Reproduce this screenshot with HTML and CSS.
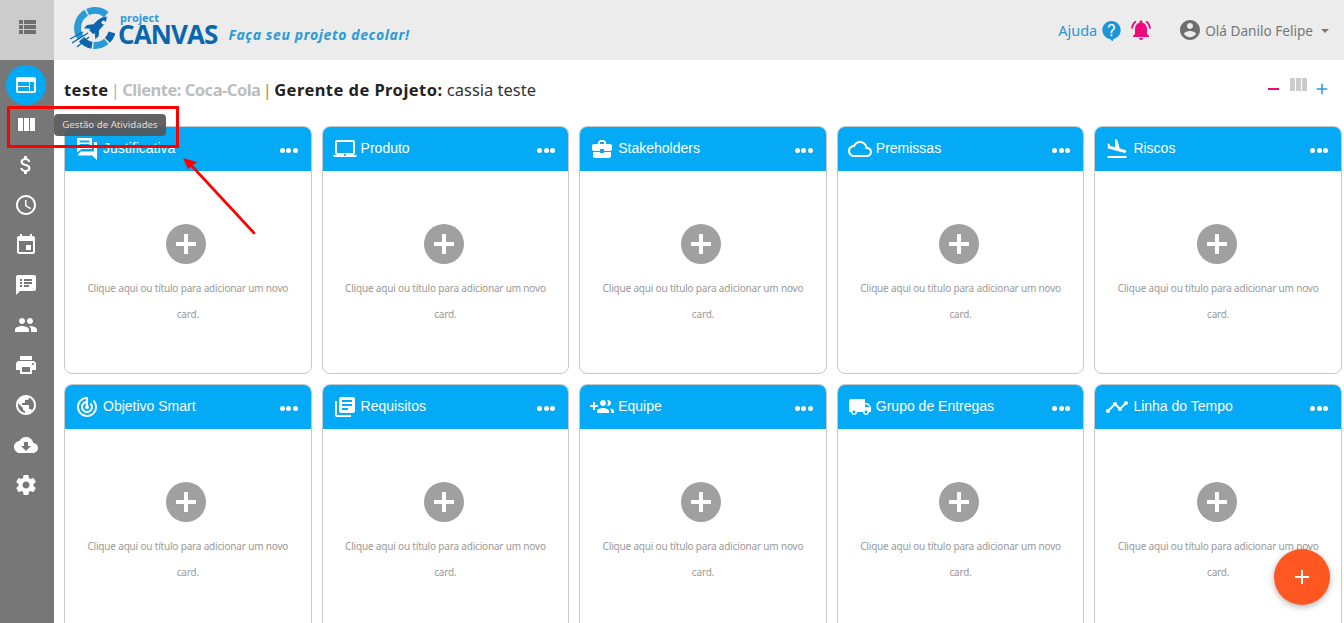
FILE: index.html
```html
<!DOCTYPE html>
<html lang="pt-BR">
<head>
<meta charset="utf-8">
<title>Project Canvas</title>
<link rel="stylesheet" href="styles.css">
</head>
<body>
<svg class="sprite" aria-hidden="true">
  <symbol id="i-list" viewBox="0 0 24 24"><path d="M4 14h4v-4H4v4zm0 5h4v-4H4v4zM4 9h4V5H4v4zm5 5h12v-4H9v4zm0 5h12v-4H9v4zM9 5v4h12V5H9z"/></symbol>
  <symbol id="i-web" viewBox="0 0 24 24"><path d="M20 4H4c-1.1 0-1.99.9-1.99 2L2 18c0 1.1.9 2 2 2h16c1.1 0 2-.9 2-2V6c0-1.1-.9-2-2-2zm-5 14H4v-4h11v4zm0-5H4V9h11v4zm5 5h-4V9h4v9z"/></symbol>
  <symbol id="i-col" viewBox="0 0 24 24"><path d="M10 18h5V5h-5v13zm-6 0h5V5H4v13zM16 5v13h5V5h-5z"/></symbol>
  <symbol id="i-money" viewBox="0 0 24 24"><path d="M11.8 10.9c-2.27-.59-3-1.2-3-2.15 0-1.09 1.01-1.85 2.7-1.85 1.78 0 2.44.85 2.5 2.1h2.21c-.07-1.72-1.12-3.3-3.21-3.81V3h-3v2.16c-1.94.42-3.5 1.68-3.5 3.61 0 2.31 1.91 3.46 4.7 4.13 2.5.6 3 1.48 3 2.41 0 .69-.49 1.79-2.7 1.79-2.06 0-2.87-.92-2.98-2.1h-2.2c.12 2.19 1.76 3.42 3.68 3.83V21h3v-2.15c1.95-.37 3.5-1.5 3.5-3.55 0-2.84-2.43-3.81-4.7-4.4z"/></symbol>
  <symbol id="i-time" viewBox="0 0 24 24"><path d="M11.99 2C6.47 2 2 6.48 2 12s4.47 10 9.99 10C17.52 22 22 17.52 22 12S17.52 2 11.99 2zM12 20c-4.42 0-8-3.58-8-8s3.58-8 8-8 8 3.58 8 8-3.58 8-8 8zm.5-13H11v6l5.25 3.15.75-1.23-4.5-2.67z"/></symbol>
  <symbol id="i-event" viewBox="0 0 24 24"><path d="M17 12h-5v5h5v-5zM16 1v2H8V1H6v2H5c-1.11 0-1.99.9-1.99 2L3 19c0 1.1.89 2 2 2h14c1.1 0 2-.9 2-2V5c0-1.1-.9-2-2-2h-1V1h-2zm3 18H5V8h14v11z"/></symbol>
  <symbol id="i-notes" viewBox="0 0 24 24"><path d="M20 2H4c-1.1 0-1.99.9-1.99 2L2 22l4-4h14c1.1 0 2-.9 2-2V4c0-1.1-.9-2-2-2zM8 14H6v-2h2v2zm0-3H6V9h2v2zm0-3H6V6h2v2zm7 6h-5v-2h5v2zm3-3h-8V9h8v2zm0-3h-8V6h8v2z"/></symbol>
  <symbol id="i-people" viewBox="0 0 24 24"><path d="M16 11c1.66 0 2.99-1.34 2.99-3S17.66 5 16 5c-1.66 0-3 1.34-3 3s1.34 3 3 3zm-8 0c1.66 0 2.99-1.34 2.99-3S9.66 5 8 5C6.34 5 5 6.34 5 8s1.34 3 3 3zm0 2c-2.33 0-7 1.17-7 3.5V19h14v-2.5c0-2.33-4.67-3.5-7-3.5zm8 0c-.29 0-.62.02-.97.05 1.16.84 1.97 1.97 1.97 3.45V19h6v-2.5c0-2.33-4.67-3.5-7-3.5z"/></symbol>
  <symbol id="i-print" viewBox="0 0 24 24"><path d="M19 8H5c-1.66 0-3 1.34-3 3v6h4v4h12v-4h4v-6c0-1.66-1.34-3-3-3zm-3 11H8v-5h8v5zm3-7c-.55 0-1-.45-1-1s.45-1 1-1 1 .45 1 1-.45 1-1 1zm-1-9H6v4h12V3z"/></symbol>
  <symbol id="i-public" viewBox="0 0 24 24"><path d="M12 2C6.48 2 2 6.48 2 12s4.48 10 10 10 10-4.48 10-10S17.52 2 12 2zm-1 17.93c-3.95-.49-7-3.85-7-7.93 0-.62.08-1.21.21-1.79L9 15v1c0 1.1.9 2 2 2v1.93zm6.9-2.54c-.26-.81-1-1.39-1.9-1.39h-1v-3c0-.55-.45-1-1-1H8v-2h2c.55 0 1-.45 1-1V7h2c1.1 0 2-.9 2-2v-.41c2.93 1.19 5 4.06 5 7.41 0 2.08-.8 3.97-2.1 5.39z"/></symbol>
  <symbol id="i-download" viewBox="0 0 24 24"><path d="M19.35 10.04C18.67 6.59 15.64 4 12 4 9.11 4 6.6 5.64 5.35 8.04 2.34 8.36 0 10.91 0 14c0 3.31 2.69 6 6 6h13c2.76 0 5-2.24 5-5 0-2.64-2.05-4.78-4.65-4.96zM17 13l-5 5-5-5h3V9h4v4h3z"/></symbol>
  <symbol id="i-settings" viewBox="0 0 24 24"><path d="M19.43 12.98c.04-.32.07-.64.07-.98s-.03-.66-.07-.98l2.11-1.65c.19-.15.24-.42.12-.64l-2-3.46c-.12-.22-.39-.3-.61-.22l-2.49 1c-.52-.4-1.08-.73-1.69-.98l-.38-2.65C14.46 2.18 14.25 2 14 2h-4c-.25 0-.46.18-.49.42l-.38 2.65c-.61.25-1.17.59-1.69.98l-2.49-1c-.23-.09-.49 0-.61.22l-2 3.46c-.13.22-.07.49.12.64l2.11 1.65c-.04.32-.07.65-.07.98s.03.66.07.98l-2.11 1.65c-.19.15-.24.42-.12.64l2 3.46c.12.22.39.3.61.22l2.49-1c.52.4 1.08.73 1.69.98l.38 2.65c.03.24.24.42.49.42h4c.25 0 .46-.18.49-.42l.38-2.65c.61-.25 1.17-.59 1.69-.98l2.49 1c.23.09.49 0 .61-.22l2-3.46c.12-.22.07-.49-.12-.64l-2.11-1.65zM12 15.5c-1.93 0-3.5-1.57-3.5-3.5s1.57-3.5 3.5-3.5 3.5 1.57 3.5 3.5-1.57 3.5-3.5 3.5z"/></symbol>
  <symbol id="i-forum" viewBox="0 0 24 24"><path d="M2 1h15v11H6.500L2 15.500V1zm2.500 2.500v2h10v-2h-10zm0 3.500v2h10V7h-10zM19 5h3v18l-5-4.500H2.500l3-4H19V5z"/></symbol>
  <symbol id="i-laptop" viewBox="0 0 24 24"><path d="M20 18c1.1 0 1.99-.9 1.99-2L22 5c0-1.1-.9-2-2-2H4c-1.1 0-2 .9-2 2v11c0 1.1.9 2 2 2H0c0 1.1.9 2 2 2h20c1.1 0 2-.9 2-2h-4zM4 5h16v11H4V5zm8 14c-.55 0-1-.45-1-1s.45-1 1-1 1 .45 1 1-.45 1-1 1z"/></symbol>
  <symbol id="i-case" viewBox="0 0 24 24"><path d="M10 16v-1H3.01L3 19c0 1.11.89 2 2 2h14c1.11 0 2-.89 2-2v-4h-7v1h-4zm10-9h-4.01V5l-2-2h-4l-2 2v2H4c-1.1 0-2 .9-2 2v3c0 1.11.89 2 2 2h6v-2h4v2h6c1.1 0 2-.9 2-2V9c0-1.1-.9-2-2-2zm-6 0h-4V5h4v2z"/></symbol>
  <symbol id="i-cloud" viewBox="0 0 24 24"><path d="M19.35 10.04C18.67 6.59 15.64 4 12 4 9.11 4 6.6 5.64 5.35 8.04 2.34 8.36 0 10.91 0 14c0 3.31 2.69 6 6 6h13c2.76 0 5-2.24 5-5 0-2.64-2.05-4.78-4.65-4.96zM19 18H6c-2.21 0-4-1.79-4-4s1.79-4 4-4h.71C7.37 7.69 9.48 6 12 6c3.04 0 5.5 2.46 5.5 5.5v.5H19c1.66 0 3 1.34 3 3s-1.34 3-3 3z"/></symbol>
  <symbol id="i-land" viewBox="0 0 24 24"><path d="M2.5 19h19v2h-19zm7.18-5.73l4.35 1.16 5.31 1.42c.8.21 1.62-.26 1.84-1.06.21-.8-.26-1.62-1.06-1.84l-5.31-1.42-2.76-9.02L10.12 2v8.28L5.15 8.95l-.93-2.32-1.45-.39v5.17l1.6.43 5.31 1.43z"/></symbol>
  <symbol id="i-target" viewBox="0 0 24 24"><path d="M19.07 4.93l-1.41 1.41C19.1 7.79 20 9.79 20 12c0 4.42-3.58 8-8 8s-8-3.58-8-8c0-4.08 3.05-7.44 7-7.93v2.02C8.16 6.57 6 9.03 6 12c0 3.31 2.69 6 6 6s6-2.69 6-6c0-1.66-.67-3.16-1.76-4.24l-1.41 1.41C15.55 9.9 16 10.9 16 12c0 2.21-1.79 4-4 4s-4-1.79-4-4c0-1.86 1.28-3.41 3-3.86v2.14c-.6.35-1 .98-1 1.72 0 1.1.9 2 2 2s2-.9 2-2c0-.74-.4-1.38-1-1.72V2h-1C6.48 2 2 6.48 2 12s4.48 10 10 10 10-4.48 10-10c0-2.76-1.12-5.26-2.93-7.07z"/></symbol>
  <symbol id="i-books" viewBox="0 0 24 24"><path d="M4 6H2v14c0 1.1.9 2 2 2h14v-2H4V6zm16-4H8c-1.1 0-2 .9-2 2v12c0 1.1.9 2 2 2h12c1.1 0 2-.9 2-2V4c0-1.1-.9-2-2-2zm-1 9H9V9h10v2zm-4 4H9v-2h6v2zm4-8H9V5h10v2z"/></symbol>
  <symbol id="i-group" viewBox="0 0 24 24"><path d="M8 10H5V7H3v3H0v2h3v3h2v-3h3v-2zm10 1c1.66 0 2.99-1.34 2.99-3S19.66 5 18 5c-.32 0-.63.05-.91.14.57.81.9 1.79.9 2.86s-.34 2.04-.9 2.86c.28.09.59.14.91.14zm-5 0c1.66 0 2.99-1.34 2.99-3S14.66 5 13 5s-3 1.34-3 3 1.34 3 3 3zm6.62 2.16c.83.73 1.38 1.66 1.38 2.84v2h3v-2c0-1.54-2.37-2.49-4.38-2.84zM13 13c-2 0-6 1-6 3v2h12v-2c0-2-4-3-6-3z"/></symbol>
  <symbol id="i-truck" viewBox="0 0 24 24"><path d="M20 8h-3V4H3c-1.1 0-2 .9-2 2v11h2c0 1.66 1.34 3 3 3s3-1.34 3-3h6c0 1.66 1.34 3 3 3s3-1.34 3-3h2v-5l-3-4zM6 18.5c-.83 0-1.5-.67-1.5-1.5s.67-1.5 1.5-1.5 1.5.67 1.5 1.5-.67 1.5-1.5 1.5zm13.5-9l1.96 2.5H17V9.5h2.5zm-1.5 9c-.83 0-1.5-.67-1.5-1.5s.67-1.5 1.5-1.5 1.5.67 1.5 1.5-.67 1.5-1.5 1.5z"/></symbol>
  <symbol id="i-line" viewBox="0 0 24 24"><path d="M23 8c0 1.1-.9 2-2 2-.18 0-.35-.02-.51-.07l-3.56 3.55c.05.16.07.34.07.52 0 1.1-.9 2-2 2s-2-.9-2-2c0-.18.02-.36.07-.52l-2.55-2.55c-.16.05-.34.07-.52.07s-.36-.02-.52-.07l-4.55 4.56c.05.16.07.33.07.51 0 1.1-.9 2-2 2s-2-.9-2-2 .9-2 2-2c.18 0 .35.02.51.07l4.56-4.55C8.02 9.36 8 9.18 8 9c0-1.1.9-2 2-2s2 .9 2 2c0 .18-.02.36-.07.52l2.55 2.55c.16-.05.34-.07.52-.07s.36.02.52.07l3.55-3.56C19.02 8.35 19 8.18 19 8c0-1.1.9-2 2-2s2 .9 2 2z"/></symbol>
  <symbol id="i-bell" viewBox="0 0 24 24"><path d="M7.58 4.08L6.15 2.65C3.75 4.48 2.17 7.3 2.03 10.5h2c.15-2.65 1.51-4.97 3.55-6.42zm12.39 6.42h2c-.15-3.2-1.73-6.02-4.12-7.85l-1.42 1.43c2.02 1.45 3.39 3.77 3.54 6.42zM18 11c0-3.07-1.64-5.64-4.5-6.32V4c0-.83-.67-1.5-1.5-1.5s-1.5.67-1.5 1.5v.68C7.63 5.36 6 7.92 6 11v5l-2 2v1h16v-1l-2-2v-5zm-6 11c.14 0 .27-.01.4-.04.65-.14 1.18-.58 1.44-1.18.1-.24.15-.5.15-.78h-4c.01 1.1.9 2 2.01 2z"/></symbol>
  <symbol id="i-user" viewBox="0 0 24 24"><path d="M12 2C6.48 2 2 6.48 2 12s4.48 10 10 10 10-4.48 10-10S17.52 2 12 2zm0 3c1.66 0 3 1.34 3 3s-1.34 3-3 3-3-1.34-3-3 1.34-3 3-3zm0 14.2c-2.5 0-4.71-1.28-6-3.22.03-1.99 4-3.08 6-3.08 1.99 0 5.97 1.09 6 3.08-1.29 1.94-3.5 3.22-6 3.22z"/></symbol>
  <symbol id="i-help" viewBox="0 0 24 24"><path d="M12 1C6.2 1 1.5 5.7 1.5 11.500c0 5.300 4 9.700 9.200 10.400L13 24.500l1.600-2.900c4.700-1.100 7.900-5.200 7.900-10.100C22.500 5.700 17.800 1 12 1zm1 17.500h-2.200v-2.200H13v2.200zm2.300-7.500l-1 1c-.8.800-1.300 1.400-1.300 3h-2.200v-.5c0-1.200.5-2.300 1.300-3.100l1.400-1.400c.4-.4.600-.9.600-1.500 0-1.200-1-2.100-2.100-2.100S9.900 7.300 9.900 8.500H7.700c0-2.400 1.900-4.300 4.300-4.300s4.300 1.900 4.300 4.300c0 1-.400 1.800-1 2.500z"/></symbol>
  <symbol id="i-plus" viewBox="0 0 24 24"><path d="M19 13h-6v6h-2v-6H5v-2h6V5h2v6h6v2z"/></symbol>
  <symbol id="i-plus-bold" viewBox="0 0 24 24"><path d="M14 10h8v4h-8v8h-4v-8H2v-4h8V2h4v8z"/></symbol>
</svg>

<div class="app">
  <button class="menu-toggle" type="button"><svg class="ico ico-menu"><use href="#i-list"/></svg></button>

  <header class="topbar">
    <div class="logo">
      <svg class="logo-mark" viewBox="0 0 46 44" aria-hidden="true">
        <g fill="none" stroke-width="7">
          <path stroke="#2b9bd8" d="M37.250 7.600A17.500 17.500 0 0 0 18.600 5.140"/>
          <path stroke="#2b9bd8" d="M17.250 5.840A17.500 17.500 0 0 0 11.700 31"/>
          <path stroke="#0a67ad" d="M12.600 32.250A17.500 17.500 0 0 0 23 38.200"/>
          <path stroke="#2b9bd8" d="M24.500 38.400A17.500 17.500 0 0 0 37.250 34.400"/>
          <path stroke="#0a67ad" d="M38.400 33.400A17.500 17.500 0 0 0 42.900 25.500"/>
        </g>
        <path fill="#0a67ad" d="M41 9.500c-5-.5-9.500 1-13 4.200l-3.500 3.600-6.500.6-3 3.300 6 .5-.5 1.800 3.500 3.400 1.800-.6.500 6 3.300-3 .6-6.400 3.500-3.600c3.200-3.300 4.500-7.800 3.800-9.800z"/>
        <circle cx="34.500" cy="15.500" r="2" fill="#ececec"/>
        <path fill="none" stroke="#0a67ad" stroke-width="1.400" d="M19 26 3 36M20 30 8 40M14 25 1 32"/>
      </svg>
      <div class="wordmark">
        <span class="wm-project">project</span>
        <span class="wm-canvas">CANVAS</span>
      </div>
      <span class="tagline">Faça seu projeto decolar!</span>
    </div>
    <div class="top-actions">
      <a class="help">Ajuda <svg class="ico ico-help"><use href="#i-help"/></svg></a>
      <svg class="ico ico-bell"><use href="#i-bell"/></svg>
      <div class="user">
        <svg class="ico ico-user"><use href="#i-user"/></svg>
        <span>Olá Danilo Felipe</span>
        <i class="caret"></i>
      </div>
    </div>
  </header>

  <nav class="sidebar">
    <a class="nav-item active"><span class="nav-bubble"><svg class="ico"><use href="#i-web"/></svg></span></a>
    <a class="nav-item"><svg class="ico"><use href="#i-col"/></svg></a>
    <a class="nav-item"><svg class="ico"><use href="#i-money"/></svg></a>
    <a class="nav-item"><svg class="ico"><use href="#i-time"/></svg></a>
    <a class="nav-item"><svg class="ico"><use href="#i-event"/></svg></a>
    <a class="nav-item"><svg class="ico"><use href="#i-notes"/></svg></a>
    <a class="nav-item"><svg class="ico"><use href="#i-people"/></svg></a>
    <a class="nav-item"><svg class="ico"><use href="#i-print"/></svg></a>
    <a class="nav-item"><svg class="ico"><use href="#i-public"/></svg></a>
    <a class="nav-item"><svg class="ico"><use href="#i-download"/></svg></a>
    <a class="nav-item"><svg class="ico"><use href="#i-settings"/></svg></a>
  </nav>

  <main class="content">
    <div class="title-row">
      <h1 class="project-title"><b>teste</b> <i class="sep">|</i> <span class="client">Cliente: Coca-Cola</span> <i class="sep sep-alt">|</i> <b>Gerente de Projeto:</b> cassia teste</h1>
      <div class="zoom-tools">
        <span class="minus"></span>
        <svg class="ico ico-cols"><use href="#i-col"/></svg>
        <svg class="ico ico-add"><use href="#i-plus"/></svg>
      </div>
    </div>

    <section class="board">
      <article class="card">
        <div class="card-head"><svg class="ico"><use href="#i-forum"/></svg><h2>Justificativa</h2><span class="dots"><i></i><i></i><i></i></span></div>
        <div class="card-body"><span class="add"><svg class="ico"><use href="#i-plus-bold"/></svg></span><p>Clique aqui ou título para adicionar um novo card.</p></div>
      </article>
      <article class="card">
        <div class="card-head"><svg class="ico"><use href="#i-laptop"/></svg><h2>Produto</h2><span class="dots"><i></i><i></i><i></i></span></div>
        <div class="card-body"><span class="add"><svg class="ico"><use href="#i-plus-bold"/></svg></span><p>Clique aqui ou título para adicionar um novo card.</p></div>
      </article>
      <article class="card">
        <div class="card-head"><svg class="ico"><use href="#i-case"/></svg><h2>Stakeholders</h2><span class="dots"><i></i><i></i><i></i></span></div>
        <div class="card-body"><span class="add"><svg class="ico"><use href="#i-plus-bold"/></svg></span><p>Clique aqui ou título para adicionar um novo card.</p></div>
      </article>
      <article class="card">
        <div class="card-head"><svg class="ico"><use href="#i-cloud"/></svg><h2>Premissas</h2><span class="dots"><i></i><i></i><i></i></span></div>
        <div class="card-body"><span class="add"><svg class="ico"><use href="#i-plus-bold"/></svg></span><p>Clique aqui ou título para adicionar um novo card.</p></div>
      </article>
      <article class="card">
        <div class="card-head"><svg class="ico"><use href="#i-land"/></svg><h2>Riscos</h2><span class="dots"><i></i><i></i><i></i></span></div>
        <div class="card-body"><span class="add"><svg class="ico"><use href="#i-plus-bold"/></svg></span><p>Clique aqui ou título para adicionar um novo card.</p></div>
      </article>
      <article class="card">
        <div class="card-head"><svg class="ico"><use href="#i-target"/></svg><h2>Objetivo Smart</h2><span class="dots"><i></i><i></i><i></i></span></div>
        <div class="card-body"><span class="add"><svg class="ico"><use href="#i-plus-bold"/></svg></span><p>Clique aqui ou título para adicionar um novo card.</p></div>
      </article>
      <article class="card">
        <div class="card-head"><svg class="ico"><use href="#i-books"/></svg><h2>Requisitos</h2><span class="dots"><i></i><i></i><i></i></span></div>
        <div class="card-body"><span class="add"><svg class="ico"><use href="#i-plus-bold"/></svg></span><p>Clique aqui ou título para adicionar um novo card.</p></div>
      </article>
      <article class="card">
        <div class="card-head"><svg class="ico"><use href="#i-group"/></svg><h2>Equipe</h2><span class="dots"><i></i><i></i><i></i></span></div>
        <div class="card-body"><span class="add"><svg class="ico"><use href="#i-plus-bold"/></svg></span><p>Clique aqui ou título para adicionar um novo card.</p></div>
      </article>
      <article class="card">
        <div class="card-head"><svg class="ico"><use href="#i-truck"/></svg><h2>Grupo de Entregas</h2><span class="dots"><i></i><i></i><i></i></span></div>
        <div class="card-body"><span class="add"><svg class="ico"><use href="#i-plus-bold"/></svg></span><p>Clique aqui ou título para adicionar um novo card.</p></div>
      </article>
      <article class="card">
        <div class="card-head"><svg class="ico"><use href="#i-line"/></svg><h2>Linha do Tempo</h2><span class="dots"><i></i><i></i><i></i></span></div>
        <div class="card-body"><span class="add"><svg class="ico"><use href="#i-plus-bold"/></svg></span><p>Clique aqui ou título para adicionar um novo card.</p></div>
      </article>
    </section>
  </main>

  <div class="tooltip">Gestão de Atividades</div>
  <div class="callout-box"></div>
  <svg class="callout-arrow" viewBox="0 0 90 95" aria-hidden="true">
    <path d="M73 78 10 10" stroke="#f00" stroke-width="2.600" stroke-linecap="round" fill="none"/>
    <path d="M2 3 16 7 7 14z" fill="#f00"/>
  </svg>
  <button class="fab" type="button"><svg class="ico"><use href="#i-plus"/></svg></button>
</div>
</body>
</html>
```

FILE: styles.css
```css
* { box-sizing: border-box; }
html, body { margin: 0; height: 100%; overflow: hidden; background: #fff; }
body { font-family: "Noto Sans", "Open Sans", sans-serif; color: #333; }
.sprite { display: none; }
.ico { width: 24px; height: 24px; fill: currentColor; flex: none; display: block; }

.app {
  position: relative;
  display: grid;
  grid-template-columns: 54px 1fr;
  grid-template-rows: 60px 1fr;
  height: 623px;
  overflow: hidden;
}

.menu-toggle {
  background: #ccc;
  border: 0;
  padding: 0 0 6px;
  display: flex;
  align-items: center;
  justify-content: center;
  color: #6f6f6f;
}

.topbar {
  background: #ececec;
  display: flex;
  align-items: center;
  justify-content: space-between;
  padding: 0 15px;
}
.logo { display: flex; align-items: flex-start; height: 60px; }
.logo-mark { width: 46px; height: 44px; margin-top: 7px; }
.wordmark { display: flex; flex-direction: column; margin: 12px 0 0 4px; color: #0a67ad; }
.wm-project { font: 700 11px/11px "Open Sans", sans-serif; color: #2b9bd8; margin-left: 1px; }
.wm-canvas { font: 700 26px/22px "Open Sans", sans-serif; letter-spacing: -.9px; margin-left: -1px; }
.tagline {
  margin: 26px 0 0 11px;
  font: italic 700 14px/18px "Noto Sans", sans-serif;
  letter-spacing: .6px;
  color: #2b9bd8;
}

.top-actions { display: flex; align-items: center; height: 60px; }
.help { display: flex; align-items: center; color: #2b96d6; font-size: 14.500px; }
.ico-help { width: 21px; height: 21px; margin-left: 4px; color: #1a96d8; }
.ico-bell { color: #ec0a7c; margin-left: 7px; }
.user { display: flex; align-items: center; color: #777; font-size: 13.600px; margin-left: 25px; }
.ico-user { color: #6f6f6f; margin-right: 3px; }
.caret {
  margin-left: 8px;
  margin-top: 2px;
  border-left: 4px solid transparent;
  border-right: 4px solid transparent;
  border-top: 4px solid #777;
}

.sidebar {
  background: #777;
  display: flex;
  flex-direction: column;
  align-items: center;
  padding-top: 5px;
  color: #fff;
}
.nav-item { height: 40px; width: 100%; display: flex; align-items: center; justify-content: center; padding-right: 2px; }
.nav-bubble {
  width: 40px; height: 40px; border-radius: 50%;
  background: #03a9f4;
  display: flex; align-items: center; justify-content: center;
}

.content { padding: 0 2px 0 10px; min-width: 0; }
.title-row { display: flex; align-items: center; justify-content: space-between; height: 58px; margin-bottom: 8px; }
.project-title { margin: 0; font-size: 16.500px; font-weight: 400; color: #333; }
.project-title b { font-weight: 700; color: #222; letter-spacing: .45px; }
.sep { font-style: normal; color: #b5b5b5; font-weight: 400; margin: 0 -2px; }
.sep-alt { color: #b8894f; }
.client { font-weight: 700; color: #bdbdbd; letter-spacing: -.5px; }
.zoom-tools { display: flex; align-items: center; padding-right: 11px; }
.minus { width: 11px; height: 2px; background: #ec0a7c; margin: 0 7px 0 0; }
.ico-cols { width: 24px; height: 24px; color: #ccc; margin-top: -8px; }
.ico-add { width: 18px; height: 18px; color: #2b96d6; margin-left: 3px; }

.board { display: grid; grid-template-columns: repeat(5, 1fr); gap: 10px; }
.card {
  height: 248px;
  border: 1px solid #c8c8c8;
  border-radius: 8px;
  overflow: hidden;
  background: #fff;
}
.card-head {
  height: 44px;
  background: #04aaf6;
  color: #fff;
  display: flex;
  align-items: center;
  padding: 0 13px 0 10px;
}
.card-head h2 {
  margin: 0 0 2px 4px;
  flex: 1;
  font: 400 14px/18px "Liberation Sans", Arial, sans-serif;
  white-space: nowrap;
}
.dots { display: flex; gap: 1.500px; margin-top: 3px; }
.dots i { width: 5px; height: 5px; border-radius: 50%; background: #fff; }
.card-body { display: flex; flex-direction: column; align-items: center; padding: 53px 15px 0; }
.add {
  width: 40px; height: 40px; border-radius: 50%;
  background: #a0a0a0; color: #fff;
  display: flex; align-items: center; justify-content: center;
  margin-right: 3px;
}
.add .ico { width: 24px; height: 24px; }
.card-body p {
  margin: 11px 0 0;
  text-align: center;
  font-size: 10px;
  letter-spacing: -.18px;
  line-height: 26px;
  color: #999;
}

.tooltip {
  position: absolute;
  left: 54px; top: 114px;
  width: 112px; height: 22px;
  background: rgba(85, 85, 85, .92);
  border-radius: 4px;
  color: #ddd;
  font-size: 9.700px;
  line-height: 22px;
  text-align: center;
  white-space: nowrap;
}
.callout-box {
  position: absolute;
  left: 7px; top: 106px;
  width: 172px; height: 42px;
  border: 3px solid #f00;
}
.callout-arrow {
  position: absolute;
  left: 181px; top: 155px;
  width: 90px; height: 95px;
}
.fab {
  position: absolute;
  left: 1274px; top: 549px;
  width: 56px; height: 56px;
  border: 0; padding: 0;
  border-radius: 50%;
  background: #ff5722;
  color: #fff;
  display: flex; align-items: center; justify-content: center;
  box-shadow: 0 2px 6px rgba(0, 0, 0, .3);
}
```
